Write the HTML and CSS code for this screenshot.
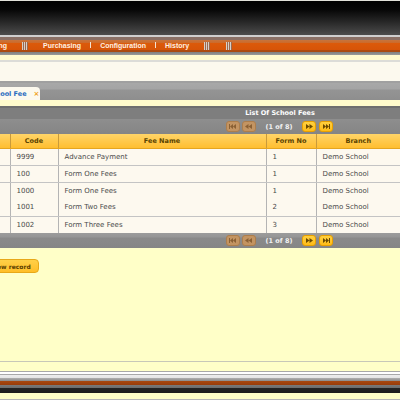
FILE: index.html
```html
<!DOCTYPE html>
<html>
<head>
<meta charset="utf-8">
<link rel="stylesheet" href="styles.css">
</head>
<body>
<div class="page">
  <div class="topline"></div>
  <div class="topbar"></div>
  <div class="menubar">
    <nav class="menu">
      <span class="item">Accounting</span>
      <span class="grip"></span>
      <span class="item">Purchasing</span>
      <span class="sep"></span>
      <span class="item">Configuration</span>
      <span class="sep"></span>
      <span class="item">History</span>
      <span class="grip"></span>
      <span class="grip grip-last"></span>
    </nav>
  </div>
  <div class="strip-yellow"></div>
  <div class="subbar"></div>
  <div class="tabbar">
    <div class="tab"><span class="tab-label">School Fee</span><span class="tab-close">×</span></div>
  </div>
  <div class="gap-yellow"></div>
  <div class="grid-title">List Of School Fees</div>
  <div class="pager">
    <span class="pbtn off"><svg width="7" height="5" viewBox="0 0 7 5"><rect x="0" y="0" width="1" height="5"/><path d="M1 2.5L4 0V5Z M4 2.5L7 0V5Z"/></svg></span>
    <span class="pbtn off gap2"><svg width="7" height="5" viewBox="0 0 7 5"><path d="M0 2.5L3.5 0V5Z M3.5 2.5L7 0V5Z"/></svg></span>
    <span class="pinfo">(1 of 8)</span>
    <span class="pbtn on"><svg width="7" height="5" viewBox="0 0 7 5"><path d="M0 0L3.5 2.5L0 5Z M3.5 0L7 2.5L3.5 5Z"/></svg></span>
    <span class="pbtn on gap3"><svg width="7" height="5" viewBox="0 0 7 5"><path d="M0 0L3 2.5L0 5Z M3 0L6 2.5L3 5Z"/><rect x="6" y="0" width="1" height="5"/></svg></span>
  </div>
  <table class="grid">
    <colgroup><col class="c0"><col class="c1"><col class="c2"><col class="c3"><col class="c4"></colgroup>
    <thead>
      <tr><th></th><th>Code</th><th>Fee Name</th><th>Form No</th><th>Branch</th></tr>
    </thead>
    <tbody>
      <tr class="line"><td></td><td>9999</td><td>Advance Payment</td><td>1</td><td>Demo School</td></tr>
      <tr class="line"><td></td><td>100</td><td>Form One Fees</td><td>1</td><td>Demo School</td></tr>
      <tr><td></td><td>1000</td><td>Form One Fees</td><td>1</td><td>Demo School</td></tr>
      <tr class="line"><td></td><td>1001</td><td>Form Two Fees</td><td>2</td><td>Demo School</td></tr>
      <tr><td></td><td>1002</td><td>Form Three Fees</td><td>3</td><td>Demo School</td></tr>
    </tbody>
  </table>
  <div class="pager pager-bottom">
    <span class="pbtn off"><svg width="7" height="5" viewBox="0 0 7 5"><rect x="0" y="0" width="1" height="5"/><path d="M1 2.5L4 0V5Z M4 2.5L7 0V5Z"/></svg></span>
    <span class="pbtn off gap2"><svg width="7" height="5" viewBox="0 0 7 5"><path d="M0 2.5L3.5 0V5Z M3.5 2.5L7 0V5Z"/></svg></span>
    <span class="pinfo">(1 of 8)</span>
    <span class="pbtn on"><svg width="7" height="5" viewBox="0 0 7 5"><path d="M0 0L3.5 2.5L0 5Z M3.5 0L7 2.5L3.5 5Z"/></svg></span>
    <span class="pbtn on gap3"><svg width="7" height="5" viewBox="0 0 7 5"><path d="M0 0L3 2.5L0 5Z M3 0L6 2.5L3 5Z"/><rect x="6" y="0" width="1" height="5"/></svg></span>
  </div>
  <div class="content">
    <button class="add-btn">New record</button>
  </div>
  <div class="footer"></div>
</div>
</body>
</html>
```
FILE: styles.css
```css
* { box-sizing: border-box; }
html, body { margin: 0; padding: 0; }
body {
  width: 400px;
  height: 400px;
  overflow: hidden;
  background: #ffffc8;
  font-family: "DejaVu Sans", Verdana, sans-serif;
}
.page { width: 400px; overflow: hidden; }

.topline { height: 1px; background: #e0e0d8; }
.topbar {
  height: 34px;
  background: linear-gradient(#000 0%, #060606 25%, #262626 60%, #4c4c4c 100%);
}

.menubar {
  height: 20px;
  padding-top: 5px;
  background: linear-gradient(to bottom,
    #cfcfcf 0, #cfcfcf 2px,
    #8a7066 2px, #8a7066 5px,
    #c8743c 5px, #cc6a2a 8px,
    #dc5a0a 8px, #d65408 15px,
    #b04a0e 15px, #a84a12 17px,
    #7e7e7e 17px, #9a9a9a 20px);
}
.menu {
  display: flex;
  align-items: center;
  height: 12px;
  margin-left: -40.5px;
  font-family: "Liberation Sans", Arial, sans-serif;
  font-weight: bold;
  font-size: 7px;
  color: #fff0e2;
  white-space: nowrap;
}
.item { padding: 0 9px; line-height: 12px; flex: none; }
.grip {
  flex: none;
  width: 6px;
  height: 8px;
  margin: 0 6px;
  background: repeating-linear-gradient(to right, #d8d0c8 0 1px, #9a6a50 1px 2px);
}
.grip-last { margin-left: 10px; }
.sep {
  flex: none;
  width: 1px;
  height: 6px;
  align-self: flex-start;
  margin-top: 2px;
  background: #f4e2d2;
}

.strip-yellow { height: 7px; background: #fffad0; border-bottom: 2px solid #dcdcd8; }
.subbar { height: 21px; background: #fcf9ee; border-bottom: 2px solid #a0a0a0; }

.tabbar {
  height: 17px;
  padding-top: 4px;
  background: linear-gradient(#a8a8a8 0, #a4a4a4 6px, #949494 7px, #8e8e8e 100%);
}
.tab {
  width: 56px;
  height: 13px;
  margin-left: -16px;
  padding-left: 3px;
  background: #fcf9ee;
  border-radius: 0 4px 0 0;
  display: flex;
  align-items: center;
  white-space: nowrap;
}
.tab-label { color: #2a6cc0; font-weight: bold; font-size: 6.5px; }
.tab-close { color: #f0a020; font-weight: bold; font-size: 7px; margin-left: 7px; }

.gap-yellow { height: 8px; background: #fffbcc; border-bottom: 2px solid #6e6e6e; }
.grid-title {
  height: 11px;
  line-height: 11px;
  padding-left: 160px;
  background: #7e7e7e;
  color: #fff;
  font-weight: bold;
  font-size: 6.5px;
  text-align: center;
}

.pager {
  height: 15px;
  padding-left: 159px;
  display: flex;
  align-items: center;
  justify-content: center;
  background: linear-gradient(#8e8e8e, #858585);
}
.pager-bottom { background: linear-gradient(#9c9c9c 0, #969696 4px, #8a8a8a 5px, #868686 100%); }
.pbtn {
  width: 14px;
  height: 11px;
  border-radius: 3px;
  display: flex;
  align-items: center;
  justify-content: center;
  flex: none;
}
.pbtn.off { background: #c39462; border: 1px solid #ad7e4c; fill: #8a6034; }
.pbtn.on { background: linear-gradient(#ffd040, #ffbc18); border: 1px solid #e8a000; fill: #6a4a00; }
.gap2 { margin-left: 2px; }
.gap3 { margin-left: 3px; }
.pinfo { color: #f2f2f2; font-weight: bold; font-size: 6.5px; margin: 0 10px; white-space: nowrap; }

.grid {
  width: 400px;
  border-collapse: collapse;
  table-layout: fixed;
  font-size: 7px;
}
.c0 { width: 10px; }
.c1 { width: 48px; }
.c2 { width: 208px; }
.c3 { width: 50px; }
.c4 { width: 84px; }
.grid th {
  height: 14px;
  padding: 0 2px;
  background: linear-gradient(#ffd468, #ffbe30);
  color: #5a4300;
  font-weight: bold;
  font-size: 6.5px;
  text-align: center;
  border-right: 1px solid #c99a3a;
  border-bottom: 1px solid #e5a520;
  white-space: nowrap;
}
.grid td {
  height: 17px;
  padding: 0 6px;
  background: #fdf9ef;
  color: #4a4a4a;
  border-right: 1px solid #b4b4b4;
  white-space: nowrap;
  overflow: hidden;
}
.grid th:last-child, .grid td:last-child { border-right: none; }
.grid tr.line td { border-bottom: 1px solid #c4c4c4; }

.content { height: 113px; padding-top: 11px; background: #ffffc8; }
.add-btn {
  display: block;
  height: 14px;
  margin: 0 0 0 -16px;
  padding: 0 7px;
  border-radius: 4px;
  border: 1px solid #e8a818;
  background: linear-gradient(#ffd048, #ffbe28);
  color: #5a4000;
  font-family: inherit;
  font-weight: bold;
  font-size: 6px;
  white-space: nowrap;
}

.footer {
  height: 39px;
  background: linear-gradient(to bottom,
    #c8c8b8 0, #c8c8b8 1px,
    #ffffc8 1px, #ffffc8 10px,
    #a8a8a8 10px, #a8a8a8 11px,
    #ffffff 11px, #ffffff 13px,
    #a8a8a8 13px, #a8a8a8 14px,
    #eeeeee 14px, #e4e4e4 17px,
    #b0b0b0 17px, #8a8a8a 20px,
    #a84810 20px, #983c0a 24px,
    #7a7a7a 24px, #6a6a6a 27px,
    #222222 27px, #1c1c1c 32px,
    #ffffc8 32px, #ffffc8 38px,
    #b8b8b8 38px, #b8b8b8 39px);
}
```
